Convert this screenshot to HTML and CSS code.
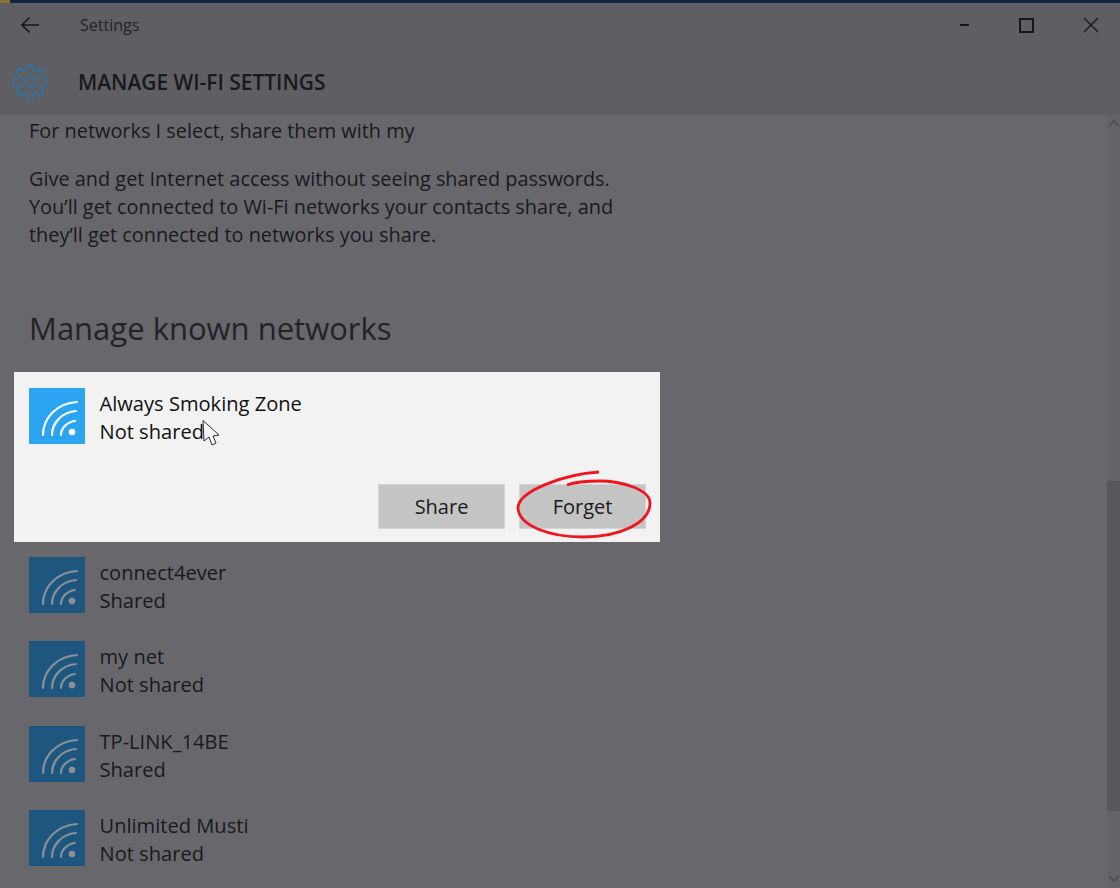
FILE: index.html
```html
<!DOCTYPE html>
<html lang="en">
<head>
    <meta charset="UTF-8">
    <title>Settings</title>
    <link rel="stylesheet" href="styles.css">
</head>
<body>
    <div class="window">
        <div class="top-strip"><span class="strip-accent"></span></div>

        <header class="header">
            <div class="title-bar">
                <svg class="back-icon" viewBox="0 0 20 18" width="20" height="18">
                    <path d="M19 9H2M9.500 1.500L2 9l7.500 7.500" fill="none" stroke="#17171b" stroke-width="1.600"/>
                </svg>
                <span class="app-name">Settings</span>
                <div class="window-buttons">
                    <span class="win-minimize"></span>
                    <span class="win-maximize"></span>
                    <svg class="win-close" viewBox="0 0 16 16" width="16" height="16">
                        <path d="M1 1l14 14M15 1L1 15" stroke="#17171b" stroke-width="1.400"/>
                    </svg>
                </div>
            </div>
            <div class="page-title">
                <svg class="gear-icon" viewBox="0 0 36 36" width="36" height="36">
                    <polygon points="30.020,14.550 34.790,15.340 34.790,20.660 30.020,21.450 28.930,24.060 31.750,27.990 27.990,31.750 24.060,28.930 21.450,30.020 20.660,34.790 15.340,34.790 14.550,30.020 11.940,28.930 8.010,31.750 4.250,27.990 7.070,24.060 5.980,21.450 1.210,20.660 1.210,15.340 5.980,14.550 7.070,11.940 4.250,8.010 8.010,4.250 11.940,7.070 14.550,5.980 15.340,1.210 20.660,1.210 21.450,5.980 24.060,7.070 27.990,4.250 31.750,8.010 28.930,11.940" fill="none" stroke="#2f719f" stroke-width="1.800" stroke-linejoin="round"/>
                    <circle cx="18" cy="18" r="5.500" fill="none" stroke="#2f719f" stroke-width="1.800"/>
                </svg>
                <h1>MANAGE WI-FI SETTINGS</h1>
            </div>
        </header>

        <div class="body-area">
            <main class="content">
                <p class="share-line">For networks I select, share them with my</p>
                <p class="share-info">Give and get Internet access without seeing shared passwords.<br>You’ll get connected to Wi-Fi networks your contacts share, and<br>they’ll get connected to networks you share.</p>

                <h2>Manage known networks</h2>

                <section class="network-selected">
                    <div class="network">
                        <svg class="wifi-icon" viewBox="0 0 56 56" width="56" height="56">
                            <rect width="56" height="56" fill="#2ba4f2"/>
                            <g fill="none" stroke="#fff" stroke-width="2.200" stroke-linecap="round">
                                <path d="M14 47C14 30 28 15 48 14"/>
                                <path d="M23 47C23 35 33 24 47 23"/>
                                <path d="M32 47C32 40 38 34 46 33"/>
                            </g>
                            <circle cx="43" cy="44" r="3.300" fill="#fff"/>
                        </svg>
                        <div class="network-text">
                            <div>Always Smoking Zone</div>
                            <div>Not shared</div>
                        </div>
                    </div>
                    <div class="network-actions">
                        <button class="action-btn">Share</button>
                        <button class="action-btn">Forget</button>
                    </div>
                </section>

                <div class="network-list">
                    <div class="network">
                        <svg class="wifi-icon" viewBox="0 0 56 56" width="56" height="56">
                            <rect width="56" height="56" fill="#1d577f"/>
                            <g fill="none" stroke="#8c8f94" stroke-width="2.200" stroke-linecap="round">
                                <path d="M14 47C14 30 28 15 48 14"/>
                                <path d="M23 47C23 35 33 24 47 23"/>
                                <path d="M32 47C32 40 38 34 46 33"/>
                            </g>
                            <circle cx="43" cy="44" r="3.300" fill="#8c8f94"/>
                        </svg>
                        <div class="network-text">
                            <div>connect4ever</div>
                            <div>Shared</div>
                        </div>
                    </div>
                    <div class="network">
                        <svg class="wifi-icon" viewBox="0 0 56 56" width="56" height="56">
                            <rect width="56" height="56" fill="#1d577f"/>
                            <g fill="none" stroke="#8c8f94" stroke-width="2.200" stroke-linecap="round">
                                <path d="M14 47C14 30 28 15 48 14"/>
                                <path d="M23 47C23 35 33 24 47 23"/>
                                <path d="M32 47C32 40 38 34 46 33"/>
                            </g>
                            <circle cx="43" cy="44" r="3.300" fill="#8c8f94"/>
                        </svg>
                        <div class="network-text">
                            <div>my net</div>
                            <div>Not shared</div>
                        </div>
                    </div>
                    <div class="network">
                        <svg class="wifi-icon" viewBox="0 0 56 56" width="56" height="56">
                            <rect width="56" height="56" fill="#1d577f"/>
                            <g fill="none" stroke="#8c8f94" stroke-width="2.200" stroke-linecap="round">
                                <path d="M14 47C14 30 28 15 48 14"/>
                                <path d="M23 47C23 35 33 24 47 23"/>
                                <path d="M32 47C32 40 38 34 46 33"/>
                            </g>
                            <circle cx="43" cy="44" r="3.300" fill="#8c8f94"/>
                        </svg>
                        <div class="network-text">
                            <div>TP-LINK_14BE</div>
                            <div>Shared</div>
                        </div>
                    </div>
                    <div class="network">
                        <svg class="wifi-icon" viewBox="0 0 56 56" width="56" height="56">
                            <rect width="56" height="56" fill="#1d577f"/>
                            <g fill="none" stroke="#8c8f94" stroke-width="2.200" stroke-linecap="round">
                                <path d="M14 47C14 30 28 15 48 14"/>
                                <path d="M23 47C23 35 33 24 47 23"/>
                                <path d="M32 47C32 40 38 34 46 33"/>
                            </g>
                            <circle cx="43" cy="44" r="3.300" fill="#8c8f94"/>
                        </svg>
                        <div class="network-text">
                            <div>Unlimited Musti</div>
                            <div>Not shared</div>
                        </div>
                    </div>
                </div>
            </main>

            <aside class="scrollbar">
                <svg class="scroll-arrow" viewBox="0 0 12 8" width="12" height="8">
                    <path d="M1 7l5-5 5 5" fill="none" stroke="#4c4c50" stroke-width="1.600"/>
                </svg>
                <div class="scroll-thumb"></div>
                <svg class="scroll-arrow" viewBox="0 0 12 8" width="12" height="8">
                    <path d="M1 1l5 5 5-5" fill="none" stroke="#4c4c50" stroke-width="1.600"/>
                </svg>
            </aside>
        </div>

        <!-- hand drawn annotation and mouse pointer, both lie over the content -->
        <svg class="annotation" viewBox="0 0 140 70" width="140" height="70">
            <path d="M84 1C50 3 3 20 3 37C4 55 35 66 68 66C105 66 135 52 135 32C135 18 105 10 85 10C70 10 60 11 52 14" fill="none" stroke="#f0141c" stroke-width="2.800"/>
        </svg>
        <svg class="pointer" viewBox="0 0 18 26" width="18" height="26">
            <path d="M1 .5L2 21l5-4 3 8 4-2-3-7 6-1z" fill="#f7f7f7" stroke="#2b2b2b" stroke-width="1"/>
        </svg>
    </div>
</body>
</html>
```

FILE: styles.css
```css
html, body {
    margin: 0;
    padding: 0;
}

body {
    font-family: "Open Sans", "Noto Sans", sans-serif;
    background-color: #68686c;
    color: #19191d;
}

.window {
    position: relative;
    width: 1120px;
    height: 888px;
    overflow: hidden;
}

.top-strip {
    height: 3px;
    background-color: #10233f;
}

.strip-accent {
    display: block;
    width: 10px;
    height: 3px;
    background-color: #8a7430;
}

.header {
    height: 112px;
    background-color: #5f5f63;
    padding-top: 1px;
    box-sizing: border-box;
}

.title-bar {
    display: flex;
    align-items: center;
    height: 42px;
    padding-left: 20px;
}

.back-icon {
    margin-right: 40px;
}

.app-name {
    font-size: 16px;
    color: #232327;
}

.window-buttons {
    display: flex;
    align-items: center;
    margin-left: auto;
}

.win-minimize {
    width: 9px;
    border-top: 2px solid #17171b;
    margin-right: 50px;
}

.win-maximize {
    width: 11px;
    height: 11px;
    border: 2px solid #17171b;
    margin-right: 49px;
}

.win-close {
    margin-right: 21px;
}

.page-title {
    display: flex;
    align-items: center;
    height: 36px;
    margin-top: 18px;
    padding-left: 12px;
}

.gear-icon {
    margin-right: 30px;
}

h1 {
    margin: 0;
    font-size: 20.900px;
    font-weight: 600;
    color: #19191d;
}

.body-area {
    display: flex;
    height: 773px;
}

.content {
    flex: 1;
    padding-left: 29px;
    font-size: 19.900px;
    line-height: 28px;
}

.share-line {
    margin: 2px 0 20px;
}

.share-info {
    margin: 0;
}

h2 {
    margin: 58px 0 0;
    font-size: 31px;
    font-weight: 400;
    line-height: 42px;
    color: #232327;
}

.network-selected {
    margin: 23px 0 0 -15px;
    width: 646px;
    height: 170px;
    padding: 16px 14px 16px 15px;
    box-sizing: border-box;
    background-color: #f2f2f2;
    color: #111;
}

.network {
    display: flex;
    align-items: flex-start;
}

.wifi-icon {
    flex: none;
    margin-right: 14.500px;
}

.network-text {
    font-size: 20.100px;
    margin-top: 2px;
}

.network-actions {
    display: flex;
    justify-content: flex-end;
    gap: 14px;
    margin-top: 38px;
}

.action-btn {
    width: 127px;
    height: 45px;
    border: 1px solid #d4d4d4;
    background-color: #c4c4c4;
    font-family: inherit;
    font-size: 20px;
    color: #1a1a1a;
    padding: 0;
}

.network-list {
    display: flex;
    flex-direction: column;
    gap: 26.400px;
    margin-top: 15px;
}

.scrollbar {
    flex: none;
    width: 13px;
    display: flex;
    flex-direction: column;
    align-items: center;
    background-color: #646468;
}

.scroll-arrow {
    flex: none;
    margin: 4px 0;
}

.scroll-thumb {
    align-self: stretch;
    height: 330px;
    margin-top: 350px;
    margin-bottom: 60px;
    background-color: #58585c;
}

.annotation {
    position: absolute;
    left: 515px;
    top: 471px;
    overflow: visible;
}

.pointer {
    position: absolute;
    left: 202px;
    top: 420px;
}
```
